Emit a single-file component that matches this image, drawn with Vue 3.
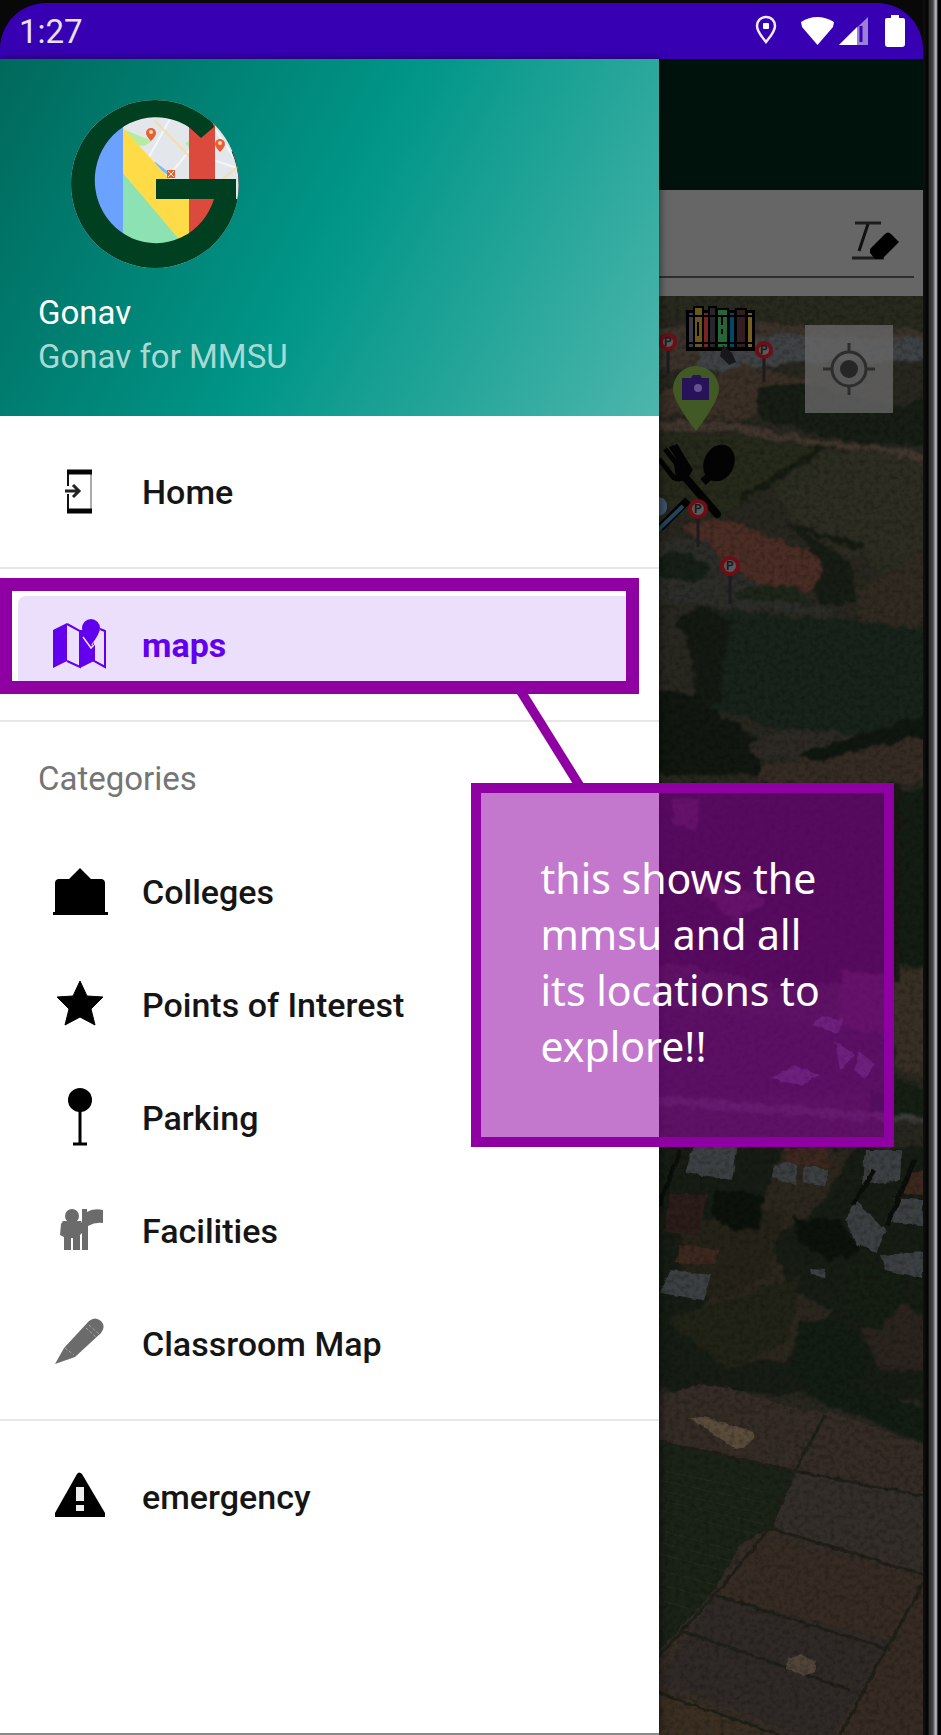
<script setup>
import { ref } from 'vue'

const query = ref('')
const categories = [
  { id: 'colleges', label: 'Colleges' },
  { id: 'points', label: 'Points of Interest' },
  { id: 'parking', label: 'Parking' },
  { id: 'facilities', label: 'Facilities' },
  { id: 'classroom', label: 'Classroom Map' },
]
const signs = [
  { x: 668, y: 342, r: 9, stem: 32 },
  { x: 764, y: 350, r: 9, stem: 32 },
  { x: 698, y: 509, r: 10, stem: 38 },
  { x: 730, y: 566, r: 10, stem: 38 },
]
</script>

<template>
  <div class="device">
    <div class="screen">
      <header class="status">
        <span class="clock">1:27</span>
        <svg class="status-icons" viewBox="0 0 152 34" aria-hidden="true">
          <path d="M12 3c-5.500 0-9 4-9 9 0 6 6 12 9 16 3-4 9-10 9-16 0-5-3.500-9-9-9z" fill="none" stroke="#f1ecfb" stroke-width="2.500" />
          <rect x="9" y="9" width="6" height="6" rx="1" fill="#fff" />
          <path d="M47 8Q63-2 80 8L79 13 63.500 31 48 13z" fill="#fff" />
          <path d="M85 31L114 3V31z" fill="#9c80d8" />
          <path d="M85 31L103 13V31z" fill="#fff" />
          <path d="M107 12V28" stroke="#3700b3" stroke-width="3" />
          <path d="M133 4h4V1h8v3h4q2 0 2 2v24q0 3-3 3h-14q-3 0-3-3V6q0-2 2-2z" fill="#fff" />
        </svg>
      </header>

      <div class="body">
        <nav class="drawer" aria-label="Main">
          <div class="profile">
            <svg class="logo" viewBox="0 0 170 170" role="img" aria-label="Gonav logo">
              <defs><clipPath id="disc"><circle cx="85" cy="85" r="84" /></clipPath></defs>
              <g clip-path="url(#disc)">
                <rect width="170" height="170" fill="#e3e7ec" />
                <path d="M60 40L120 100M100 20L75 65M125 45L92 85M140 60L170 70M145 30L165 60" stroke="#f4f6f8" stroke-width="2" />
                <path d="M53 30L82 42 74 47 66 46z" fill="#b4eda0" />
                <path d="M115 44l6-3v10z" fill="#b4eda0" />
                <path d="M85 22L120 58M153 80L170 66" stroke="#f5dca8" stroke-width="2" />
                <path d="M84 64L100 76" stroke="#7cbcf5" stroke-width="3" />
                <rect width="53" height="170" fill="#6ba1ff" />
                <path d="M53 74L115 145V170H53z" fill="#8ce2b3" />
                <path d="M53 29L119 101V148L113 145 53 74z" fill="#ffdc47" />
                <rect x="119" y="20" width="26" height="130" fill="#dc4a3d" />
                <g fill="#e9602f">
                  <path d="M76 34a5 5 0 1 1 10 0q0 3-5 8-5-5-5-8z" /><path d="M145 45a5 5 0 1 1 10 0q0 3-5 8-5-5-5-8z" />
                  <path d="M97 71h8v8h-8z" />
                </g>
                <circle cx="81" cy="33" r="2" fill="#ffd5c7" /><circle cx="150" cy="44" r="2" fill="#ffd5c7" />
                <path d="M98 72l6 6m0-6l-6 6" stroke="#fff" />
                <path d="M144 28L130-10H-10V180H180V100H166V80H86V100H144A61 63 0 1 1 120 29L131 39Z" fill="#003f20" />
                <path d="M163 52A85 85 0 0 1 169 100" fill="none" stroke="#03150c" stroke-width="3" />
              </g>
            </svg>
            <p class="name">Gonav</p>
            <p class="sub">Gonav for MMSU</p>
          </div>

          <div class="group">
            <a class="item" href="#home">
              <svg class="icon" viewBox="0 0 54 54" aria-hidden="true">
                <path d="M15 21V6H38V46H15V29" fill="none" stroke="#111" stroke-width="2" />
                <path d="M38 8V44" stroke="#aaa" stroke-width="2" />
                <path d="M14 7H39M14 46H39" stroke="#050505" stroke-width="5" />
                <path d="M12 26H26M20 20L26 26 20 32" fill="none" stroke="#222" stroke-width="3" />
              </svg>
              <span>Home</span>
            </a>
          </div>

          <div class="group">
            <a class="item active" href="#maps" aria-current="page">
              <svg class="icon" viewBox="0 0 54 54" aria-hidden="true">
                <path d="M0 12L14 5V43L0 50zM27 12H33L39 28 41 24V43L27 50z" fill="#6200ee" />
                <path d="M14 6L27 13V49L14 43M41 27V43L52 49V13L47 11" fill="none" stroke="#6200ee" stroke-width="2" />
                <path d="M38 1a9 9 0 0 1 9 9q0 6-9 17-9-11-9-17a9 9 0 0 1 9-9z" fill="#6200ee" />
                <path d="M30 19L38 30 41 27" fill="none" stroke="#ecdffc" stroke-width="1.500" />
              </svg>
              <span>maps</span>
            </a>
            <div class="frame"></div>
            <svg class="connector" viewBox="0 0 68 90" aria-hidden="true"><path d="M0 0H11L67 90H56z" fill="#8e00a2" /></svg>
            <aside class="callout">
              <p>this shows the<br>mmsu and all<br>its locations to<br>explore!!</p>
            </aside>
          </div>

          <div class="group list">
            <h2>Categories</h2>
            <a v-for="c in categories" :key="c.id" class="item" :href="'#' + c.id">
              <svg class="icon" viewBox="0 0 54 54" aria-hidden="true">
                <path v-if="c.id === 'colleges'" d="M27 3L38 14H49Q52 15 52 18V47H55V50H0V47H2V18Q2 15 5 14H16z" />
                <path v-else-if="c.id === 'points'" d="M27 3L34 18 50 19 38 31 42 47 27 39 12 47 16 31 4 19 20 18z" stroke="#000" stroke-linejoin="round" />
                <g v-else-if="c.id === 'parking'">
                  <circle cx="27" cy="9" r="12" />
                  <path d="M27 10V52M20 53H34" stroke="#000" stroke-width="3" />
                </g>
                <g v-else-if="c.id === 'facilities'" fill="#6b6b6b">
                  <circle cx="19" cy="12" r="7" />
                  <path d="M10 17H28L29 19V5H34V8Q40 4 50 6V19Q42 18 35 22V46H29V29L27 31V46H20V34H18V46H11V33L7 31 8 20z" />
                </g>
                <g v-else>
                  <path d="M2 47L11 31 36 4Q42-1 48 4 53 9 48 16L22 40z" fill="#6b6b6b" />
                  <path d="M12 31L21 38M33 11L43 20M36 8L46 17" stroke="#a3a3a3" stroke-width="1" stroke-dasharray="3 2" />
                </g>
              </svg>
              <span>{{ c.label }}</span>
            </a>
          </div>

          <div class="group last">
            <a class="item" href="#emergency">
              <svg class="icon" viewBox="0 0 54 54" aria-hidden="true">
                <path d="M24 4Q26 1 29 4L52 43V47H2V43z" />
                <path d="M23 17H31V31H23zM23 35H31V41H23z" fill="#eee" />
              </svg>
              <span>emergency</span>
            </a>
          </div>
        </nav>

        <main class="content">
          <div class="toolbar"></div>
          <div class="search">
            <div class="field">
              <input v-model="query" type="text" aria-label="Search location">
              <button type="button" aria-label="Clear text">
                <svg viewBox="0 0 52 44" aria-hidden="true">
                  <path d="M5 4H31M2 39H34" stroke="#1d1d1d" stroke-width="3" />
                  <path d="M18 5L9 32" stroke="#111" stroke-width="3" />
                  <path d="M35 15Q38 12 41 15L49 23 32 40H25L20 34V30z" />
                </svg>
              </button>
            </div>
          </div>

          <div class="map">
            <svg class="terrain" viewBox="659 296 264 1439" preserveAspectRatio="xMidYMin slice" role="img" aria-label="Satellite map">
              <defs>
                <filter id="rough" x="-5%" y="-5%" width="110%" height="110%" color-interpolation-filters="sRGB">
                  <feTurbulence type="fractalNoise" baseFrequency="0.07" numOctaves="3" seed="4" />
                  <feDisplacementMap in="SourceGraphic" scale="12" xChannelSelector="R" yChannelSelector="G" />
                  <feGaussianBlur stdDeviation="1" />
                </filter>
                <filter id="edge" x="-5%" y="-5%" width="110%" height="110%" color-interpolation-filters="sRGB">
                  <feTurbulence type="fractalNoise" baseFrequency="0.1" numOctaves="2" seed="8" />
                  <feDisplacementMap in="SourceGraphic" scale="5" xChannelSelector="R" yChannelSelector="G" />
                  <feGaussianBlur stdDeviation="0.7" />
                </filter>
                <filter id="grain" x="0" y="0" width="100%" height="100%" color-interpolation-filters="sRGB">
                  <feTurbulence type="fractalNoise" baseFrequency="0.2" numOctaves="3" seed="11" />
                  <feColorMatrix values="0 0 0 0 0  0 0 0 0 0  0 0 0 0 0  1.600 0 0 0 -0.650" />
                </filter>
              </defs>
              <rect x="659" y="296" width="264" height="1439" fill="#28271f" />
              <g filter="url(#rough)">
                <path d="M650 290H935V340L820 325 740 320 650 316z" fill="#282a1e" />
                <path d="M650 328L700 322 930 330V350L800 345 700 365 650 375z" fill="#3b332b" />
                <path d="M700 350L780 335 930 340V360L805 363 700 372z" fill="#404346" />
                <path d="M650 395L740 365 810 378V395L740 420 650 412z" fill="#3b3027" />
                <path d="M755 388L800 382 900 408 930 395V448L840 440 760 418z" fill="#171e15" />
                <path d="M650 420L720 420 820 440 930 453V464L820 446 730 432 650 432z" fill="#40362d" />
                <path d="M650 434L740 436 815 448 770 490 720 515 650 522z" fill="#262a1b" />
                <path d="M820 450L930 466V620L900 590 850 545 790 510 770 495z" fill="#2b2d21" />
                <path d="M813 470Q780 500 798 525L850 555 930 560V465L860 448z" fill="#2d2d22" />
                <path d="M740 500L825 447M790 525L865 548" stroke="#171c12" stroke-width="6" />
                <path d="M680 526L725 518 780 540 830 560 835 582 810 590 750 585 715 550z" fill="#4a2d25" />
                <path d="M795 528L825 545 850 565 860 600 825 606 812 590 825 570z" fill="#171d14" />
                <path d="M650 540L700 540 750 580 830 606 830 616 720 608 650 600z" fill="#2c2d29" />
                <path d="M650 555L690 551 710 570 700 580 650 576z" fill="#172018" />
                <path d="M735 592L780 583 820 605 740 600z" fill="#1d2619" />
                <path d="M855 590L930 548V633L860 622z" fill="#302a21" />
                <path d="M700 608L930 630V735L800 735 700 705z" fill="#18231a" />
                <path d="M650 600L690 608 680 670 700 705 650 695z" fill="#292820" />
                <path d="M675 620L700 605 730 620 720 705 695 700 690 650z" fill="#141a12" />
                <path d="M650 690L700 697 730 720 760 740V775L650 775z" fill="#121710" />
                <path d="M748 745Q780 725 840 732L860 745 820 757 755 757z" fill="#2d2a25" />
                <path d="M760 768L930 730V783H760z" fill="#352c24" />
                <path d="M800 755L850 738 930 713V735L860 750 820 762z" fill="#101710" />
                <path d="M870 790H935V970L890 960z" fill="#141d13" />
                <path d="M870 970H935V1080L870 1060z" fill="#383025" />
                <path d="M870 1070L930 1090V1120H870z" fill="#161f14" />
                <path d="M650 785H900V980L780 985 650 960z" fill="#1a1812" />
                <path d="M672 799H700L695 830 673 825zM690 875L770 900 730 920zM840 970L895 975V1050L840 1040z" fill="#38292b" />
                <path d="M650 1005L895 1035V1090L650 1100z" fill="#22231e" />
                <path d="M650 1094L930 1117V1124L650 1106z" fill="#3a3a36" />
                <path d="M650 1148H935V1400L650 1390z" fill="#171d14" />
                <path d="M780 1150L855 1150 825 1200 770 1240 790 1290 835 1310 785 1360 740 1360 700 1320 725 1270 760 1210z" fill="#2c271e" />
                <path d="M680 1220L785 1210 770 1275 720 1300 680 1285z" fill="#252319" />
                <path d="M665 1320L800 1275 790 1340 730 1370z" fill="#222317" />
                <path d="M860 1330L905 1300 930 1330V1370H880z" fill="#2b241e" />
                <path d="M740 1190L765 1200 760 1230 735 1230 710 1215 715 1190zM792 1218L840 1220 860 1250 830 1260 800 1245z" fill="#0c130b" />
                <path d="M845 1270L895 1260 910 1290 880 1330 845 1320z" fill="#151e12" />
                <path d="M800 1320L840 1320 870 1350 865 1390 930 1410V1445L890 1430 820 1400 790 1370z" fill="#131d12" />
              </g>
              <g filter="url(#edge)">
                <path d="M650 1398L700 1385 730 1388 800 1410 830 1412 925 1445V1740H650z" fill="#342c25" />
                <path d="M650 1438L795 1470 770 1528 740 1545 715 1590 650 1660z" fill="#1b2317" />
                <path d="M795 1472L925 1495V1572L770 1530z" fill="#332e29" />
                <path d="M755 1535L925 1580V1740H840L715 1600z" fill="#372c24" />
                <path d="M715 1595L890 1640 835 1735H800L659 1680z" fill="#302a27" />
                <path d="M650 1692L690 1700 780 1735H650z" fill="#3b2f22" />
                <path d="M650 1440L795 1471 925 1496M770 1528L925 1575M825 1415L795 1471 770 1528 715 1595 650 1665M715 1595L890 1650M650 1690L780 1735M925 1580L880 1660 840 1735M680 1630L850 1690" fill="none" stroke="#1f2119" stroke-width="3" />
                <path d="M690 1418L705 1417 752 1431 754 1438 745 1449 733 1447z" fill="#5a4c3b" />
                <path d="M788 1658L800 1654 815 1662V1672L803 1676 787 1669z" fill="#51453a" />
                <path d="M694 1145H738L732 1180 685 1172zM670 1270L711 1275 703 1300 660 1293zM775 1165L797 1160 795 1185 773 1178zM805 1165L828 1170 825 1185 803 1182zM865 1150H902L900 1180 862 1185zM895 1198L923 1200V1225L890 1222zM855 1200L886 1230 877 1252 857 1245 845 1220zM880 1255L923 1252V1278L885 1270zM810 1269L825 1270 824 1277 811 1275z" fill="#3d4042" />
                <path d="M670 1193L707 1195 700 1235 664 1232z" fill="#2b1d19" />
                <path d="M785 1148H830L828 1168 787 1163zM907 1175L923 1170V1195L900 1193zM680 1245L720 1250 715 1265 675 1262z" fill="#3c281f" />
                <path d="M680 1150L660 1205M875 1170L852 1205M915 1160L887 1225" stroke="#0c0e0b" stroke-width="5" />
                <path d="M822 1015L842 1020 838 1035 812 1025zM795 1065L820 1075 800 1085 770 1078zM860 1050L875 1065 865 1078 853 1070zM835 1040L855 1055 840 1070z" fill="#494552" />
              </g>
              <g stroke="#273123" opacity=".6">
                <path d="M659 1470l105 22M659 1480l110 24M659 1490l105 24M659 1500l105 24M659 1510l95 24M659 1530l80 22M659 1542l75 20M659 1554l70 18M659 1570l60 16M659 1584l50 14M659 1600l42 12" />
              </g>
              <rect x="659" y="296" width="264" height="1439" filter="url(#grain)" opacity=".35" />

              <!-- Library marker -->
              <g stroke="#000" stroke-width="2">
                <path d="M687 311H754V350H687z" fill="#171313" />
                <path d="M688 312h6v36h-6z" fill="#3d3b49" /><path d="M694 307h9v41h-9z" fill="#6b561b" />
                <path d="M703 312h6v36h-6z" fill="#782422" /><path d="M709 307h7v41h-7z" fill="#26262b" />
                <path d="M717 309h11v39h-11z" fill="#286536" /><path d="M729 312h6v36h-6z" fill="#00486a" />
                <path d="M736 309h10v39h-10z" fill="#321e20" /><path d="M747 312h6v36h-6z" fill="#756020" />
                <path d="M688 316h65M688 343h65M698 322v14M722 317v8M722 329v5" fill="none" />
              </g>
              <path d="M723 345L732 353 736 362 729 365 720 356z" fill="#18181a" />

              <!-- Photo spot marker -->
              <path d="M696 366a23 23 0 0 1 23 23q0 12-23 42-23-30-23-42a23 23 0 0 1 23-23z" fill="#415a25" />
              <path d="M682 378h9l2-3h7l2 3h7v22h-27z" fill="#28135a" /><circle cx="698" cy="388" r="4" fill="#65518c" />

              <!-- Dining marker -->
              <path d="M684 476L717 514" stroke="#030303" stroke-width="8" stroke-linecap="round" />
              <path d="M659 459L674 478Q684 482 690 470L675 445M665 449L680 468M671 446L683 465" fill="none" stroke="#030303" stroke-width="5" />
              <path d="M674 464L690 466 688 480 676 480z" fill="#030303" />
              <ellipse cx="719" cy="463" rx="15" ry="19" transform="rotate(25 719 463)" fill="#030303" />
              <path d="M711 475L703 482M688 500L660 528" stroke="#030303" stroke-width="8" />
              <path d="M683 506L658 530" stroke="#24445b" stroke-width="4" />
              <path d="M659 497q9 2 8 11-1 7-8 8z" fill="#3d5267" />

              <g v-for="s in signs" :key="s.x">
                <path :d="`M${s.x} ${s.y}v${s.stem}`" stroke="#1c1c20" stroke-width="3" />
                <circle :cx="s.x" :cy="s.y" :r="s.r - 2" fill="#5a5a5a" stroke="#6d0d16" stroke-width="4" />
                <text :x="s.x" :y="s.y + 4" class="sign">P</text>
              </g>
            </svg>
            <button class="locate" type="button" aria-label="My location">
              <svg viewBox="0 0 54 54" aria-hidden="true">
                <circle cx="27" cy="27" r="17" fill="none" stroke="#2d2d2d" stroke-width="3" /><circle cx="27" cy="27" r="9" fill="#262626" />
                <path d="M27 1V10M27 44V53M1 27H10M44 27H53" stroke="#2d2d2d" stroke-width="3" />
              </svg>
            </button>
          </div>
        </main>
      </div>
    </div>
    <div class="bezel"></div>
  </div>
</template>

<style>
body { margin: 0; background: #080808; }
</style>

<style scoped>
.device { display: flex; min-height: 100vh; box-sizing: border-box; padding-top: 3px; background: #080808; font-family: Roboto, "Liberation Sans", sans-serif; font-size: 33px; }
.screen { flex: 1; min-width: 0; display: flex; flex-direction: column; }
.bezel { width: 18px; margin-top: -3px; background: linear-gradient(90deg, #111 0, #030303 5px, #29282b 6px, #48464b 10px, #77757b 11px, #c2c2c5 13px, #77777b 14px, #000 15px); }
.status { height: 56px; box-sizing: border-box; display: flex; align-items: center; justify-content: space-between; padding: 0 17px 0 19px; border-radius: 46px 46px 0 0; background: #3700b3; }
.clock { color: #e9e2f7; }
.status-icons { width: 152px; height: 34px; }
.body { flex: 1; display: flex; }
.drawer { position: relative; z-index: 1; width: 71.4%; box-sizing: border-box; background: #fff; border-bottom: 2px solid #8a8a8a; box-shadow: 1px 0 8px #0008; }
.profile { height: 357px; box-sizing: border-box; padding: 40px 38px 0; background: linear-gradient(118deg, #00695c, #009688 50%, #4db6ac); }
.logo { display: block; width: 170px; height: 170px; margin-left: 32px; }
.profile p { margin: 0; line-height: 44px; }
.profile .name { margin-top: 22px; color: #fff; }
.profile .sub { color: #a9d9d4; }
.group { position: relative; padding: 19px 0; border-bottom: 2px solid #e7e7e7; }
.group.list { padding-top: 0; }
.group.last { border: 0; }
h2 { margin: 0; padding-left: 38px; line-height: 113px; font-size: 33px; font-weight: 400; color: #757575; }
.item { display: flex; align-items: center; gap: 35px; height: 97px; margin: 8px 24px 8px 18px; padding-left: 35px; border-radius: 8px; color: #151515; font-size: 34px; font-weight: 500; text-decoration: none; }
.item + .item { margin-top: 16px; }
.item.active { background: #ecdffc; color: #6200ee; font-weight: 700; }
.icon { width: 54px; height: 54px; overflow: visible; }
.frame { position: absolute; top: 9px; left: 0; width: 97%; height: 116px; box-sizing: border-box; border: 13px solid #8e00a2; border-left-width: 12px; pointer-events: none; }
.connector { position: absolute; z-index: 2; top: 125px; left: 78.4%; width: 68px; height: 90px; }
.callout { position: absolute; z-index: 2; top: 214px; left: 71.4%; width: 64.3%; height: 364px; box-sizing: border-box; border: 10px solid #8e00a2; padding: 57px 0 0 60px; background: #8e00a287; background-clip: padding-box; color: #fff; font-family: "Noto Sans", "Open Sans", sans-serif; font-size: 41px; line-height: 56px; white-space: nowrap; }
.callout p { margin: 0; }
.content { flex: 1; min-width: 0; display: flex; flex-direction: column; }
.toolbar { height: 131px; background: #00120c; }
.search { height: 106px; box-sizing: border-box; padding: 16px 9px 18px 0; background: #666; }
.field { display: flex; align-items: center; height: 100%; box-sizing: border-box; border-bottom: 2px solid #2e2e2e; }
.field input { flex: 1; min-width: 0; height: 60px; padding: 0 16px; border: 0; background: none; font: inherit; outline: none; }
.field button { width: 52px; height: 44px; margin: 0 12px 0 0; padding: 0; border: 0; background: none; }
.field svg { display: block; width: 52px; height: 44px; }
.map { position: relative; flex: 1; overflow: hidden; background: #28271f; }
.terrain { position: absolute; inset: 0; width: 100%; height: 100%; }
.sign { font-size: 12px; font-weight: 700; text-anchor: middle; fill: #1b1b1b; }
.locate { position: absolute; top: 29px; right: 30px; display: grid; place-items: center; width: 88px; height: 88px; padding: 0; border: 0; background: #666666cc; }
.locate svg { width: 54px; height: 54px; }
</style>
